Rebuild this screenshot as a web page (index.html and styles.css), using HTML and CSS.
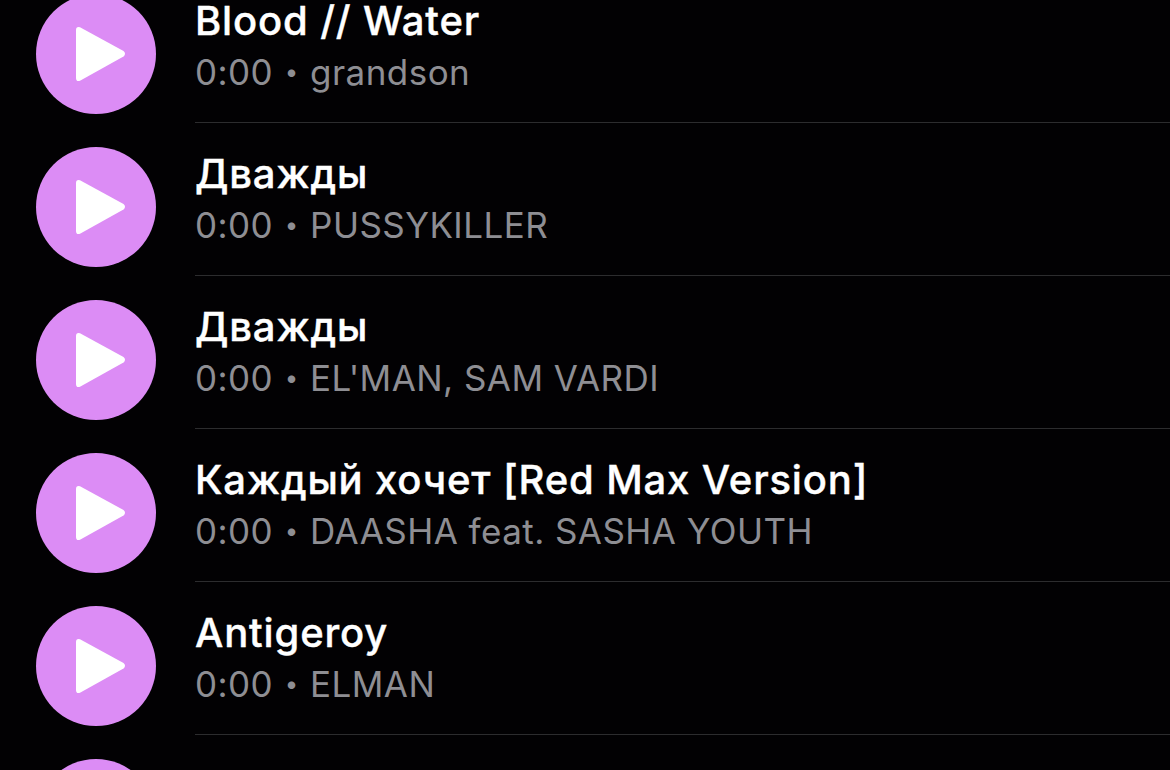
FILE: index.html
```html
<!DOCTYPE html>
<html lang="en">

<head>
    <meta charset="UTF-8">
    <meta name="viewport" content="width=device-width, initial-scale=1.0">
    <link rel="stylesheet" href="styles.css">
</head>

<body>
    <svg class="defs" width="0" height="0">
        <symbol id="play" viewBox="0 0 50 56">
            <path d="M4 1.2 L47.5 25 Q50.5 27.5 47.5 30.5 L4 54.8 Q0 56 0 52 V4 Q0 0.2 4 1.2 Z" />
        </symbol>
    </svg>
    <div class="list">
        <div class="track">
            <button class="play"><svg width="50" height="56"><use href="#play" /></svg></button>
            <div class="info">
                <div class="title">Blood // Water</div>
                <div class="sub"><span>0:00</span><i>•</i><span>grandson</span></div>
            </div>
        </div>
        <div class="track">
            <button class="play"><svg width="50" height="56"><use href="#play" /></svg></button>
            <div class="info">
                <div class="title">Дважды</div>
                <div class="sub"><span>0:00</span><i>•</i><span>PUSSYKILLER</span></div>
            </div>
        </div>
        <div class="track">
            <button class="play"><svg width="50" height="56"><use href="#play" /></svg></button>
            <div class="info">
                <div class="title">Дважды</div>
                <div class="sub"><span>0:00</span><i>•</i><span>EL'MAN, SAM VARDI</span></div>
            </div>
        </div>
        <div class="track">
            <button class="play"><svg width="50" height="56"><use href="#play" /></svg></button>
            <div class="info">
                <div class="title">Каждый хочет [Red Max Version]</div>
                <div class="sub"><span>0:00</span><i>•</i><span>DAASHA feat. SASHA YOUTH</span></div>
            </div>
        </div>
        <div class="track">
            <button class="play"><svg width="50" height="56"><use href="#play" /></svg></button>
            <div class="info">
                <div class="title">Antigeroy</div>
                <div class="sub"><span>0:00</span><i>•</i><span>ELMAN</span></div>
            </div>
        </div>
    </div>
    <button class="play play-last"><svg width="50" height="56"><use href="#play" /></svg></button>
</body>

</html>
```

FILE: styles.css
```css
html,
body {
    height: 100%;
}

body {
    font-family: Inter, "Noto Sans", sans-serif;
    background-color: #020103;
    margin: 0;
    padding: 0;
    height: 770px;
    overflow: hidden;
}

.defs {
    display: block;
}

.list {
    margin-top: -30px;
    padding-left: 36px;
}

.track {
    display: flex;
    height: 153px;
    box-sizing: border-box;
    padding-top: 24px;
}

.play {
    flex: none;
    display: flex;
    align-items: center;
    justify-content: center;
    width: 120px;
    height: 120px;
    padding: 0 0 0 10px;
    border: none;
    border-radius: 50%;
    background-color: #dc8cf5;
}

.play svg {
    fill: #fff;
}

.play-last {
    margin: 24px 0 0 36px;
}

.info {
    flex: 1;
    margin-left: 39px;
    margin-top: -24px;
    padding-top: 30px;
    border-bottom: 1px solid #2c2c2e;
}

.title {
    color: #fff;
    font-size: 40px;
    font-weight: 500;
    letter-spacing: 0.85px;
    -webkit-text-stroke: 0.4px #fff;
    line-height: 42px;
    white-space: nowrap;
}

.sub {
    display: flex;
    align-items: center;
    color: #8e8e93;
    font-size: 35px;
    letter-spacing: 0.45px;
    line-height: 44px;
    margin-top: 8px;
    white-space: nowrap;
}

.sub i {
    font-style: normal;
    font-size: 24px;
    margin: 0 11.5px;
}
```
